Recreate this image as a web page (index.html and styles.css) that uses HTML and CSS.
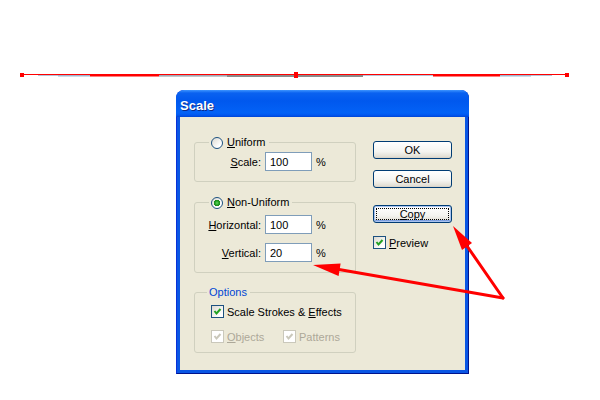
FILE: index.html
```html
<!DOCTYPE html>
<html lang="en">
<head>
  <meta charset="UTF-8" />
  <title>Scale</title>
  <link rel="stylesheet" href="styles.css">
</head>
<body>

<div class="page">
  <div class="dialog">
    <div class="titlebar">Scale</div>
    <div class="client">
      <div class="left">
        <fieldset class="group group-uniform">
          <legend><span class="radio"></span><span><u>U</u>niform</span></legend>
          <div class="row">
            <label><u>S</u>cale:</label>
            <input type="text" value="100">
            <span>%</span>
          </div>
        </fieldset>

        <fieldset class="group group-nonuniform">
          <legend><span class="radio checked"></span><span><u>N</u>on-Uniform</span></legend>
          <div class="row">
            <label><u>H</u>orizontal:</label>
            <input type="text" value="100">
            <span>%</span>
          </div>
          <div class="row">
            <label><u>V</u>ertical:</label>
            <input type="text" value="20">
            <span>%</span>
          </div>
        </fieldset>

        <fieldset class="group group-options">
          <legend class="options-title">Options</legend>
          <div class="check-row">
            <span class="check-item">
              <span class="checkbox"><svg width="11" height="11" viewBox="0 0 11 11"><polyline points="2.5,5 4.5,7.5 8.5,3" /></svg></span>
              <span>Scale Strokes &amp; <u>E</u>ffects</span>
            </span>
          </div>
          <div class="check-row two">
            <span class="check-item disabled">
              <span class="checkbox"><svg width="11" height="11" viewBox="0 0 11 11"><polyline points="2.5,5 4.5,7.5 8.5,3" /></svg></span>
              <span><u>O</u>bjects</span>
            </span>
            <span class="check-item disabled">
              <span class="checkbox"><svg width="11" height="11" viewBox="0 0 11 11"><polyline points="2.5,5 4.5,7.5 8.5,3" /></svg></span>
              <span>Patterns</span>
            </span>
          </div>
        </fieldset>
      </div>

      <div class="right">
        <button class="btn">OK</button>
        <button class="btn btn-cancel">Cancel</button>
        <button class="btn btn-copy focused"><u>C</u>opy</button>
        <span class="check-item preview">
          <span class="checkbox"><svg width="11" height="11" viewBox="0 0 11 11"><polyline points="2.5,5 4.5,7.5 8.5,3" /></svg></span>
          <span><u>P</u>review</span>
        </span>
      </div>
    </div>
  </div>

  <!-- path on the artboard + callout arrows drawn over the dialog -->
  <svg class="overlay" width="600" height="400" viewBox="0 0 600 400">
    <line x1="38" y1="75.5" x2="552" y2="75.5" stroke="#b4c6da" stroke-width="1" />
    <line x1="58" y1="75.5" x2="90" y2="75.5" stroke="#9fb6cf" stroke-width="2" />
    <line x1="500" y1="75.5" x2="531" y2="75.5" stroke="#9fb6cf" stroke-width="2" />
    <line x1="159" y1="76" x2="227" y2="76" stroke="#8a8f96" stroke-width="1" />
    <line x1="227" y1="76" x2="363" y2="76" stroke="#8a8a8a" stroke-width="2" />
    <line x1="20" y1="74.5" x2="566" y2="74.5" stroke="#ff0000" stroke-width="1" />
    <line x1="90" y1="75.5" x2="159" y2="75.5" stroke="#ff0000" stroke-width="2" />
    <line x1="433" y1="75.5" x2="500" y2="75.5" stroke="#ff0000" stroke-width="2" />
    <rect x="20" y="73" width="4" height="4" fill="#ff0000" />
    <rect x="565" y="73" width="4" height="4" fill="#ff0000" />
    <rect x="294" y="72" width="4" height="6" fill="#ff0000" />

    <g stroke="#ff0000" stroke-width="3" fill="none" stroke-linecap="round">
      <line x1="467" y1="246" x2="503" y2="298" />
      <line x1="339" y1="269.5" x2="503" y2="298" />
    </g>
    <polygon points="453,226 462,250 472,243" fill="#ff0000" />
    <polygon points="313,265 338.6,276 340.6,263.5" fill="#ff0000" />
  </svg>
</div>

</body>
</html>
```

FILE: styles.css
```css
body {
  margin: 0;
  background: #fff;
  font-family: "Liberation Sans", Arial, sans-serif;
  font-size: 11px;
  color: #000;
}
.page {
  position: relative;
  width: 600px;
  height: 400px;
  box-sizing: border-box;
  padding: 90px 0 0 176px;
}
.overlay {
  position: absolute;
  left: 0;
  top: 0;
  pointer-events: none;
}
.dialog {
  width: 293px;
  height: 284px;
  box-sizing: border-box;
  display: flex;
  flex-direction: column;
  background: #0a56e4;
  border: 1px solid #0831d9;
  border-right-color: #00138c;
  border-bottom-color: #00138c;
  border-radius: 8px 8px 0 0;
}
.titlebar {
  height: 27px;
  box-sizing: border-box;
  margin: -1px -1px 0;
  padding: 4px 0 0 4px;
  line-height: 23px;
  border-radius: 8px 8px 0 0;
  background: linear-gradient(180deg, #3d95ff 0, #0a62f0 3px, #0058ee 40%, #0362f6 85%, #0157f0 93%, #0045d4 100%);
  color: #fff;
  font-size: 13px;
  font-weight: bold;
  text-shadow: 1px 1px #0b2a8a;
}
.client {
  flex: 1;
  margin: 0 3px 3px;
  padding: 19px 0 0 14px;
  background: #ece9d8;
  display: flex;
  gap: 17px;
}
.left {
  width: 162px;
}
.group {
  margin: 0;
  padding: 6px 0 10px;
  width: 162px;
  box-sizing: border-box;
  border: 1px solid #d0d0bf;
  border-radius: 3px;
  min-inline-size: 0;
}
.group legend {
  margin-left: 14px;
  padding: 0 3px 0 2px;
  height: 13px;
  line-height: 13px;
  display: flex;
  align-items: center;
  gap: 4px;
}
.group-uniform {
  padding-top: 3px;
}
.group-nonuniform {
  margin-top: 14px;
}
.group-options {
  margin-top: 13px;
  padding-bottom: 9px;
}
.group legend.options-title {
  color: #0046d5;
  margin-left: 12px;
  padding: 0 3px 0 2px;
}
.row {
  display: grid;
  grid-template-columns: 66px 47px auto;
  column-gap: 4px;
  align-items: center;
  height: 19px;
}
.row + .row {
  margin-top: 9px;
}
.row label {
  text-align: right;
}
.row input {
  width: 47px;
  height: 19px;
  box-sizing: border-box;
  margin: 0;
  padding: 0 0 0 4px;
  border: 1px solid #7f9db9;
  background: #fff;
  font-family: inherit;
  font-size: 11px;
  color: #000;
  outline: none;
}
.radio {
  width: 12px;
  height: 12px;
  box-sizing: border-box;
  border: 1px solid #1c5180;
  border-radius: 50%;
  background: linear-gradient(135deg, #dcd9d0 0, #fff 75%);
  display: inline-block;
}
.radio.checked {
  background: radial-gradient(circle, #63d763 0, #21a121 2px, #1c8a1c 3px, transparent 3.5px),
              linear-gradient(135deg, #dcd9d0 0, #fff 75%);
}
.check-row {
  display: flex;
  padding-left: 16px;
  height: 13px;
  align-items: center;
}
.check-row + .check-row {
  margin-top: 12px;
}
.check-row.two {
  display: grid;
  grid-template-columns: 72px auto;
}
.check-item {
  display: flex;
  align-items: center;
  gap: 3px;
}
.checkbox {
  width: 13px;
  height: 13px;
  box-sizing: border-box;
  border: 1px solid #1c5180;
  background: linear-gradient(135deg, #dcd9d0 0, #fff 80%);
  display: inline-flex;
  align-items: center;
  justify-content: center;
}
.checkbox polyline {
  fill: none;
  stroke: #21a121;
  stroke-width: 2;
}
.check-item.disabled {
  color: #aca899;
}
.check-item.disabled .checkbox {
  border-color: #cac8bb;
  background: #fff;
}
.check-item.disabled polyline {
  stroke: #cac8bb;
}
.right {
  width: 79px;
  margin-top: 5px;
  display: flex;
  flex-direction: column;
}
.btn {
  width: 79px;
  height: 18px;
  margin: 0;
  padding: 0;
  border: 1px solid #003c74;
  border-radius: 3px;
  background: linear-gradient(180deg, #fff 0, #f4f4f0 60%, #e3e0d6 90%, #d6d0c5 100%);
  font-family: inherit;
  font-size: 11px;
  color: #000;
  line-height: 16px;
}
.btn-cancel {
  margin-top: 11px;
}
.btn-copy {
  margin-top: 17px;
}
.btn.focused {
  box-shadow: inset 0 0 0 1px #a9c3ef, inset 0 -1px 0 1px #7d9fe0;
  outline: 1px dotted #000;
  outline-offset: -4px;
}
.preview {
  margin-top: 13px;
}
```
